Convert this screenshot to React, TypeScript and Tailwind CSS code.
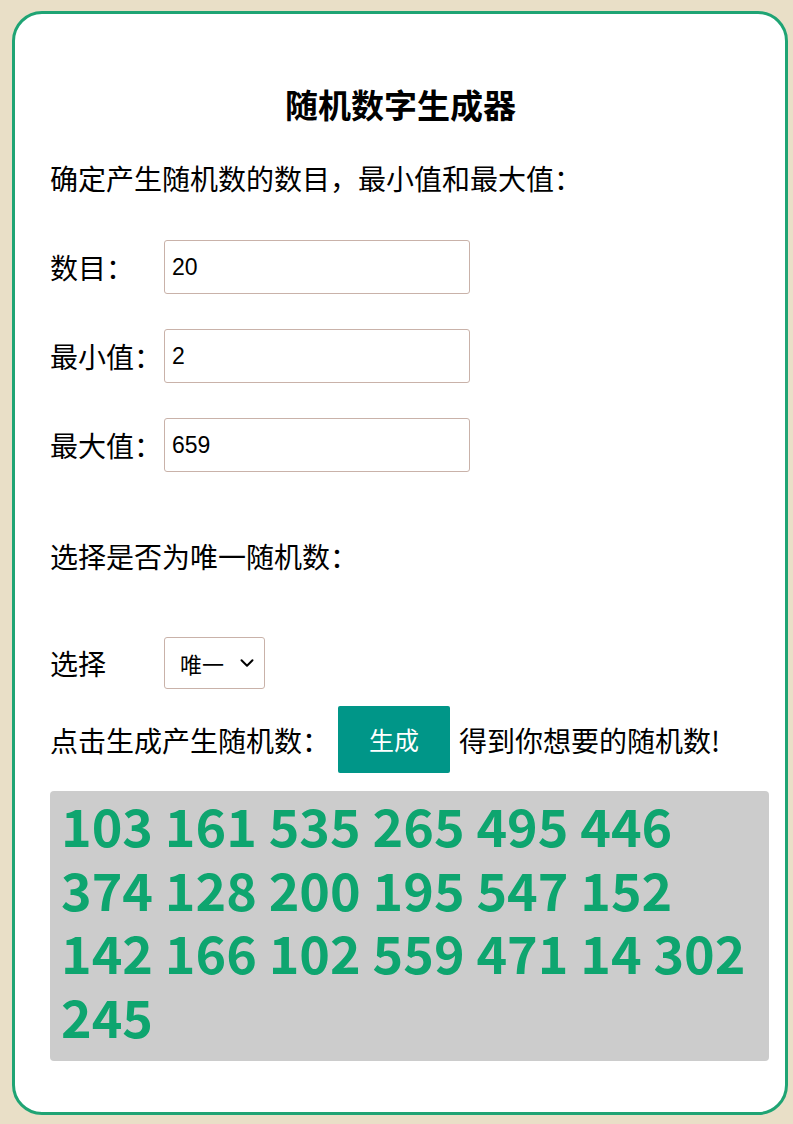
import React from "react";
import { ChevronDown } from "lucide-react";

const NUMBERS = [
  103, 161, 535, 265, 495, 446, 374, 128, 200, 195, 547, 152, 142, 166, 102,
  559, 471, 14, 302, 245,
];

const cjk = "font-['Noto_Sans_CJK_SC',sans-serif]";
const latin = "font-['Liberation_Sans','Noto_Sans_CJK_SC',sans-serif]";

const Field = ({ label, value }: { label: string; value: string }) => (
  <div className="flex items-center">
    <span className="w-[114px] text-[28px] leading-[40px] text-black">{label}</span>
    <input
      defaultValue={value}
      className={`h-[54px] w-[306px] rounded-[3px] border border-[#c9b2a9] bg-white px-[7px] text-[23px] text-black outline-none ${latin}`}
    />
  </div>
);

const App = () => {
  return (
    <div className={`min-h-screen bg-[#e9dfc7] pl-[12px] pr-[5px] pt-[11px] pb-[8px] ${cjk}`}>
      <div className="flex flex-col rounded-[30px] border-[3px] border-[#1fa474] bg-white pl-[35px] pr-[16px] pt-[70px] pb-[51px]">
        <h1 className="pr-[18px] text-center text-[33px] font-bold leading-[40px] text-black">
          随机数字生成器
        </h1>
        <p className="mt-[34px] text-[28px] leading-[40px] text-black">
          确定产生随机数的数目，最小值和最大值：
        </p>

        <div className="mt-[42px] flex flex-col gap-[35px]">
          <Field label="数目：" value="20" />
          <Field label="最小值：" value="2" />
          <Field label="最大值：" value="659" />
        </div>

        <p className="mt-[64px] text-[28px] leading-[40px] text-black">
          选择是否为唯一随机数：
        </p>

        <div className="mt-[61px] flex items-center">
          <span className="w-[114px] text-[28px] leading-[40px] text-black">选择</span>
          <div className="relative flex h-[52px] w-[101px] items-center rounded-[3px] border border-[#c9b2a9] bg-white pl-[15px]">
            <span className="text-[22px] text-black">唯一</span>
            <ChevronDown className="absolute right-[6px] top-[14px] h-[22px] w-[22px] text-black" strokeWidth={2.2} />
          </div>
        </div>

        <div className="mt-[17px] flex items-center">
          <span className="text-[28px] leading-[40px] text-black">点击生成产生随机数：</span>
          <button className="ml-[8px] h-[67px] w-[112px] rounded-[2px] bg-[#009688] text-[25px] text-white">
            生成
          </button>
          <span className="ml-[9px] text-[28px] leading-[40px] text-black">得到你想要的随机数!</span>
        </div>

        <div className="mt-[18px] min-h-[270px] rounded-[4px] bg-[#cccccc] px-[11px] pt-[2px] pb-[8px]">
          <p className="text-[52px] font-bold leading-[63.5px] text-[#0ea56f]">
            {NUMBERS.join(" ")}
          </p>
        </div>
      </div>
    </div>
  );
};

export default App;
